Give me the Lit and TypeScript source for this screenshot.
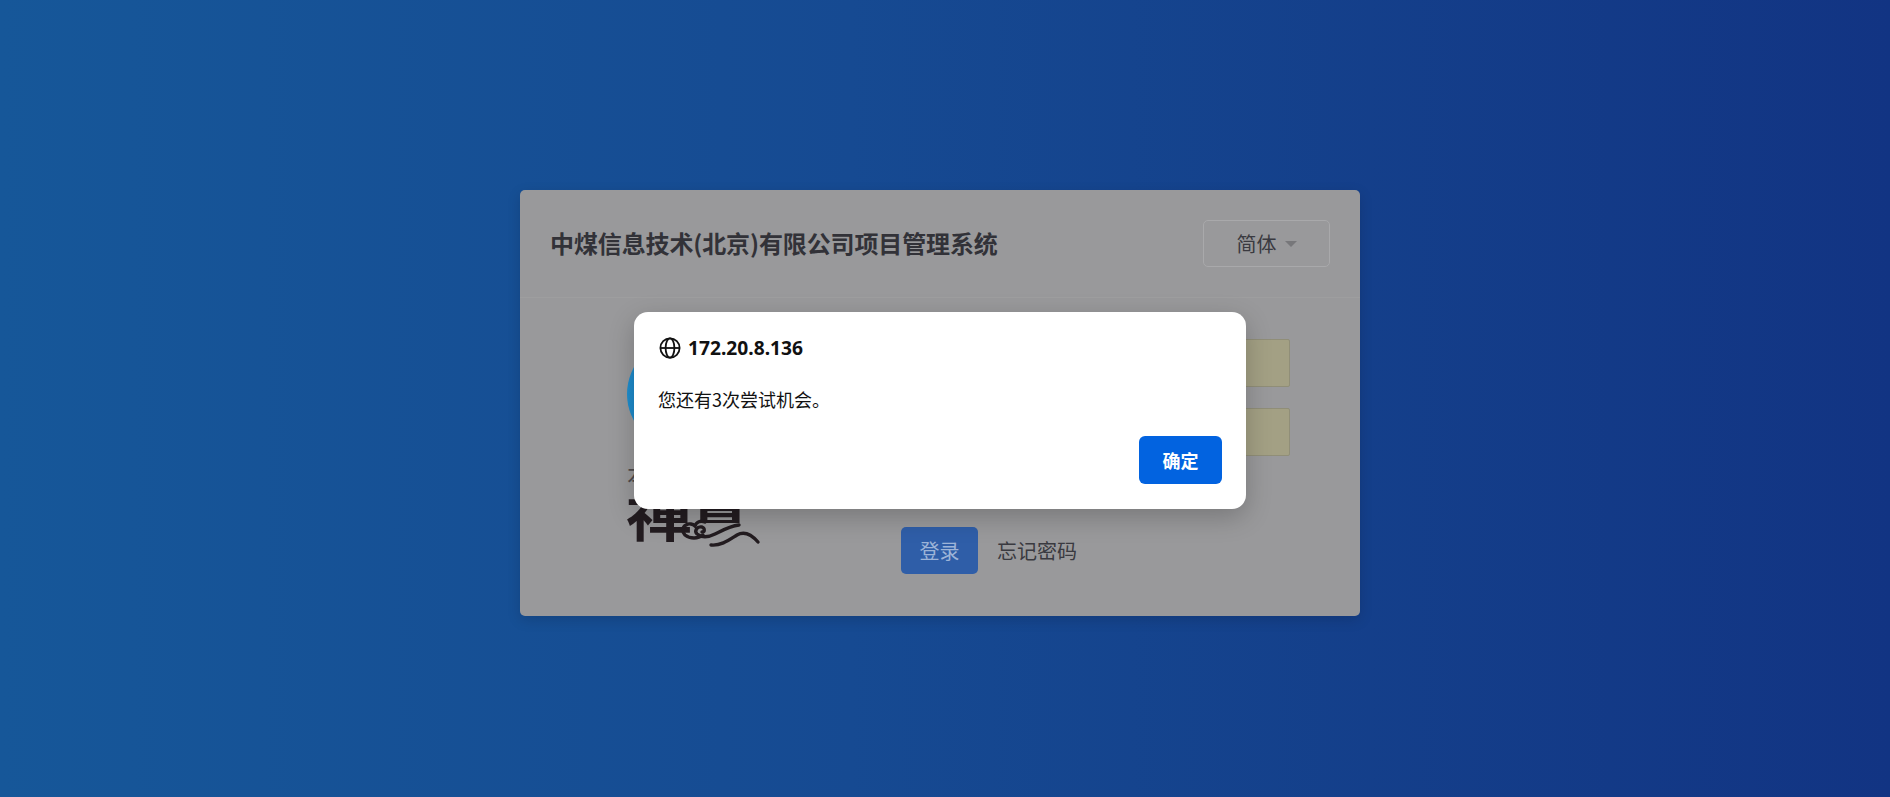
import { LitElement, html, css, svg } from "lit";
import { customElement } from "lit/decorators.js";

@customElement("app-root")
export class AppRoot extends LitElement {
  static styles = css`
    :host {
      display: block;
      height: 797px;
      overflow: hidden;
      position: relative;
      font-family: "Noto Sans CJK SC", "Noto Sans", sans-serif;
      background: linear-gradient(90deg, #165799 0%, #164a92 45%, #123483 100%);
    }
    .page { padding: 190px 530px 0 520px; }
    .card {
      height: 426px;
      background: #99999b;
      border-radius: 5px;
      box-shadow: 0 4px 14px rgba(0, 0, 0, 0.14);
      display: flex;
      flex-direction: column;
    }
    .head {
      height: 108px;
      box-sizing: border-box;
      flex: none;
      display: flex;
      align-items: center;
      justify-content: space-between;
      padding: 0 30px 1px;
      border-bottom: 1px solid #9e9e9f;
    }
    .title {
      font-size: 24px;
      font-weight: 700;
      color: #323238;
      line-height: 32px;
      letter-spacing: -0.12px;
    }
    .lang {
      width: 127px;
      height: 47px;
      box-sizing: border-box;
      border: 1px solid #a9a9ab;
      border-radius: 5px;
      display: flex;
      align-items: center;
      justify-content: center;
      gap: 8px;
      font-size: 20px;
      color: #3a3a40;
    }
    .caret {
      width: 0;
      height: 0;
      border-left: 6px solid transparent;
      border-right: 6px solid transparent;
      border-top: 6px solid #77777a;
      margin-top: 2px;
    }
    .body {
      display: flex;
      gap: 141px;
      padding: 41px 70px 0 107px;
    }
    .logo { width: 133px; height: 210px; flex: none; display: block; overflow: visible; }
    .logo-top { font-size: 24px; font-weight: 400; fill: #4f4b4d; }
    .logo-mark { font-size: 54px; font-weight: 700; fill: #231c20; }
    .logo-mark2 { font-size: 50px; font-weight: 700; fill: #231c20; }
    .swirl { fill: none; stroke: #231c20; stroke-width: 3.4; stroke-linecap: round; }
    .form { flex: 1; display: flex; flex-direction: column; gap: 21px; }
    .field {
      height: 48px;
      box-sizing: border-box;
      background: #a3a084;
      border: 1px solid #908e78;
      border-radius: 2px;
    }
    .actions {
      display: flex;
      align-items: center;
      gap: 19px;
      margin-top: 50px;
    }
    .login {
      width: 77px;
      height: 47px;
      background: #2f5ea8;
      border-radius: 5px;
      color: #9db4d8;
      font-size: 20px;
      display: flex;
      align-items: center;
      justify-content: center;
    }
    .forgot { font-size: 20px; color: #3a3a40; }
    .modal {
      position: absolute;
      left: 634px;
      top: 312px;
      width: 612px;
      box-sizing: border-box;
      padding: 24px 24px 25px;
      background: #fff;
      border-radius: 14px;
      box-shadow: 0 8px 26px rgba(0, 0, 0, 0.22);
      color: #111;
    }
    .host-row { display: flex; align-items: center; gap: 6px; height: 24px; }
    .globe { width: 24px; height: 24px; display: block; flex: none; }
    .host {
      font-family: "Noto Sans", "Open Sans", sans-serif;
      font-size: 19.2px;
      font-weight: 700;
      line-height: 24px;
    }
    .msg { margin-top: 27px; font-size: 18px; font-weight: 400; line-height: 24px; }
    .foot { display: flex; justify-content: flex-end; margin-top: 25px; }
    .ok {
      width: 83px;
      height: 48px;
      background: #0263e0;
      border-radius: 6px;
      color: #fff;
      font-size: 18px;
      font-weight: 700;
      display: flex;
      align-items: center;
      justify-content: center;
    }
  `;

  private logo() {
    return svg`
      <defs>
        <linearGradient id="lg" x1="0" y1="0" x2="1" y2="0">
          <stop offset="0" stop-color="#1f8fcf" />
          <stop offset="0.5" stop-color="#0d66ad" />
        </linearGradient>
        <clipPath id="upper"><rect x="60" y="140" width="70" height="44" /></clipPath>
      </defs>
      <circle cx="55" cy="55" r="55" fill="url(#lg)" />
      <text class="logo-top" x="0" y="145">本</text>
      <text class="logo-mark" x="-1" y="198" textLength="66" lengthAdjust="spacingAndGlyphs">禅</text>
      <g clip-path="url(#upper)">
        <text class="logo-mark2" x="62" y="199" textLength="62" lengthAdjust="spacingAndGlyphs">息</text>
      </g>
      <path class="swirl" d="M112 186c-9 1-16 5-24 9-6 3-13 4-18 0-3-3 0-8 5-7 3 1 3 5 0 5" />
      <path class="swirl" d="M76 196c-5 4-13 4-18 0-3-3-3-8 1-10 3-2 7-1 9 1 1-4 6-6 10-4" />
      <path class="swirl" d="M84 206c10 1 18-5 26-10 7-4 14-1 21 7" />
    `;
  }

  render() {
    return html`
      <div class="page">
        <section class="card">
          <header class="head">
            <div class="title">中煤信息技术(北京)有限公司项目管理系统</div>
            <div class="lang">简体<span class="caret"></span></div>
          </header>
          <div class="body">
            <svg class="logo" viewBox="0 0 133 210">${this.logo()}</svg>
            <div class="form">
              <div class="field"></div>
              <div class="field"></div>
              <div class="actions">
                <div class="login">登录</div>
                <div class="forgot">忘记密码</div>
              </div>
            </div>
          </div>
        </section>
      </div>
      <div class="modal" role="alertdialog">
        <div class="host-row">
          <svg class="globe" viewBox="0 0 24 24" fill="none" stroke="#111" stroke-width="1.8">
            <circle cx="12" cy="12" r="9.6" />
            <ellipse cx="12" cy="12" rx="4.4" ry="9.6" />
            <path d="M2.4 12h19.2" />
          </svg>
          <span class="host">172.20.8.136</span>
        </div>
        <div class="msg">您还有3次尝试机会。</div>
        <div class="foot"><div class="ok">确定</div></div>
      </div>
    `;
  }
}
